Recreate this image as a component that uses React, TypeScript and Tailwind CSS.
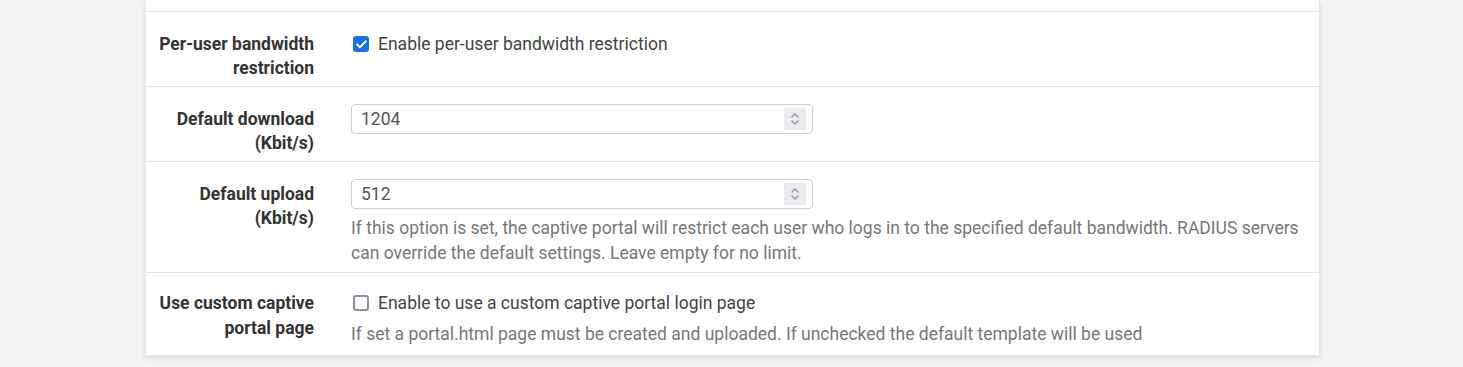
import { Check } from "lucide-react"

const font = { fontFamily: "Roboto, 'Liberation Sans', sans-serif" }

function Spinner() {
  return (
    <div className="ml-auto mr-[6px] flex h-[22px] w-[22px] flex-col items-center justify-center bg-[#ebebef]">
      <svg width="10" height="16" viewBox="0 0 10 16" fill="none" stroke="#8f8f9d" strokeWidth="1.4" strokeLinecap="round" strokeLinejoin="round">
        <path d="M2 6 L5 3 L8 6" />
        <path d="M2 10 L5 13 L8 10" />
      </svg>
    </div>
  )
}

function NumberInput({ value }: { value: string }) {
  return (
    <div className="flex h-[30px] w-[462px] items-center rounded-[4px] border border-[#cfcfcf] bg-white pl-[9px] text-[#555]">
      <span>{value}</span>
      <Spinner />
    </div>
  )
}

function Box({ checked }: { checked?: boolean }) {
  return checked ? (
    <span className="flex h-4 w-4 shrink-0 items-center justify-center rounded-[3px] bg-[#1a6fe8]">
      <Check size={13} strokeWidth={3.5} className="text-white" />
    </span>
  ) : (
    <span className="block h-4 w-4 shrink-0 rounded-[3px] border-2 border-[#8f8f9d] bg-white" />
  )
}

function Row({ label, children, tight }: { label: string[]; children: React.ReactNode; tight?: boolean }) {
  return (
    <div className={`flex border-t border-[#e3e3e3] ${tight ? "pt-[11px]" : "pt-[13px]"}`}>
      <div className={`w-[183px] shrink-0 pl-[6px] pr-[15px] pt-[7px] text-right font-bold text-[#333] ${tight ? "leading-[25px]" : "leading-[24px]"}`}>
        {label.map(l => (
          <div key={l} className="whitespace-nowrap">{l}</div>
        ))}
      </div>
      <div className="ml-[7px] flex-1 px-[15px]">{children}</div>
    </div>
  )
}

export default function App() {
  return (
    <div className="h-[367px] w-[1463px] overflow-hidden bg-[#f4f4f4]" style={font}>
      <div className="ml-[145px] w-[1175px] border-x border-[#e6e6e6] bg-white text-[17.5px] shadow-[0_3px_6px_rgba(0,0,0,0.1)]">
        <div className="h-[11px]" />

        <Row label={["Per-user bandwidth", "restriction"]}>
          <label className="flex items-center gap-[9px] pt-[7px] leading-[24px] text-[#444]">
            <span className="ml-[2px]"><Box checked /></span>
            Enable per-user bandwidth restriction
          </label>
          <div className="h-[30px]" />
        </Row>

        <Row label={["Default download", "(Kbit/s)"]}>
          <div className="pt-[4px]">
            <NumberInput value="1204" />
          </div>
          <div className="h-[27px]" />
        </Row>

        <Row label={["Default upload", "(Kbit/s)"]}>
          <div className="pt-[4px]">
            <NumberInput value="512" />
          </div>
          <p className="mt-[7px] pb-[6px] leading-[25px] text-[#777]">
            If this option is set, the captive portal will restrict each user who logs in to the specified default bandwidth. RADIUS servers can override the default settings. Leave empty for no limit.
          </p>
        </Row>

        <Row tight label={["Use custom captive", "portal page"]}>
          <label className="flex items-center gap-[9px] pt-[7px] leading-[24px] text-[#444]">
            <span className="ml-[2px]"><Box /></span>
            Enable to use a custom captive portal login page
          </label>
          <p className="pt-[7px] pb-[9px] leading-[24px] text-[#777]">
            If set a portal.html page must be created and uploaded. If unchecked the default template will be used
          </p>
        </Row>
      </div>
    </div>
  )
}
